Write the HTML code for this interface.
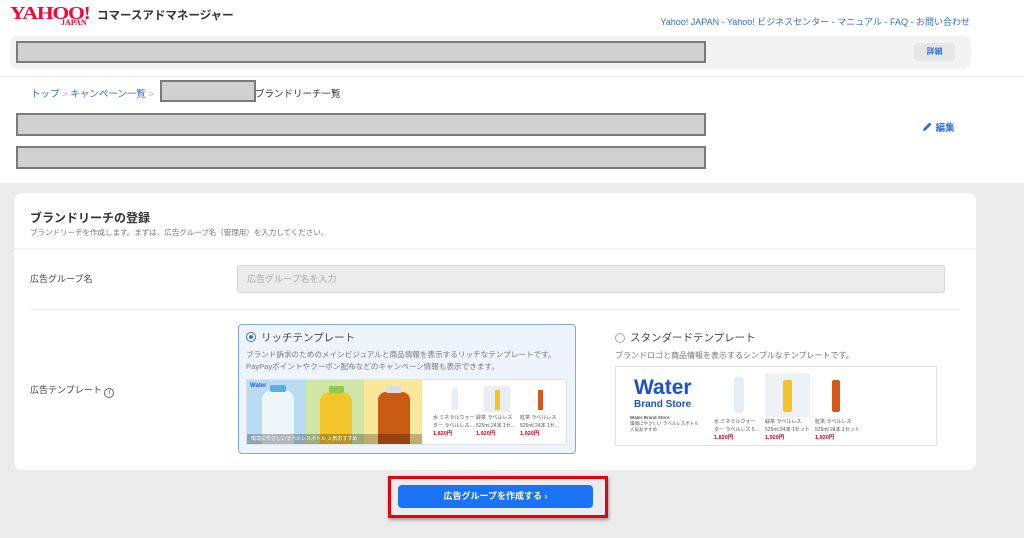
<!DOCTYPE html>
<html><head><meta charset="utf-8"><style>
*{margin:0;padding:0;box-sizing:border-box}
body{width:1024px;height:538px;overflow:hidden;background:#fff;font-family:"Liberation Sans","Noto Sans CJK JP",sans-serif;position:relative;color:#333}
.a{position:absolute}
.gbox{position:absolute;background:#d0d0d0;border:2px solid #7a7a7a}
.blue{color:#2f6fd6}
.sm{font-size:5px;color:#555;line-height:8px;white-space:nowrap}
.pr{color:#d0021b;font-size:5.5px;font-weight:bold}
</style></head><body>
<div class="a" style="left:10px;top:3px;font-family:'Liberation Serif',serif;font-weight:bold;color:#ff0033;font-size:18px;letter-spacing:-1px;transform:scaleX(1.2);transform-origin:left">YAHOO!</div>
<div class="a" style="left:61px;top:18px;font-family:'Liberation Serif',serif;font-weight:bold;color:#ff0033;font-size:8px">JAPAN</div>
<div class="a" style="left:97px;top:7px;font-size:11.5px;font-weight:bold;color:#333">コマースアドマネージャー</div>
<div class="a blue" style="right:54px;top:15px;font-size:9px">Yahoo! JAPAN - Yahoo! ビジネスセンター - マニュアル - FAQ - お問い合わせ</div>
<div class="a" style="left:10px;top:36px;width:961px;height:33px;background:#f3f3f3;border-radius:8px"></div>
<div class="gbox" style="left:16px;top:41px;width:690px;height:22px"></div>
<div class="a" style="left:914px;top:43px;width:41px;height:18px;background:#e6e6e6;border-radius:4px;font-size:8px;font-weight:bold;color:#2f6fd6;text-align:center;line-height:18px">詳細</div>
<div class="a" style="left:0;top:76px;width:1024px;height:1px;background:#eaeaea"></div>
<div class="a" style="left:31px;top:86px;font-size:9.5px;color:#aaa"><span class="blue">トップ</span> &gt; <span class="blue">キャンペーン一覧</span> &gt;</div>
<div class="gbox" style="left:160px;top:80px;width:96px;height:22px"></div>
<div class="a" style="left:255px;top:86px;font-size:9.5px;color:#333">ブランドリーチ一覧</div>
<div class="gbox" style="left:16px;top:113px;width:690px;height:23px"></div>
<div class="gbox" style="left:16px;top:146px;width:690px;height:23px"></div>
<div class="a blue" style="left:922px;top:120px;font-size:9.5px;font-weight:bold"><svg width="11" height="11" viewBox="0 0 11 11" style="vertical-align:-1px"><path d="M1 10 L1.5 7.5 L7.5 1.5 L9.5 3.5 L3.5 9.5 Z" fill="#2f6fd6"/></svg> 編集</div>
<div class="a" style="left:0;top:183px;width:1024px;height:355px;background:#ebebeb"></div>
<div class="a" style="left:14px;top:193px;width:962px;height:277px;background:#fff;border-radius:8px"></div>
<div class="a" style="left:30px;top:209px;font-size:12px;font-weight:bold;color:#333">ブランドリーチの登録</div>
<div class="a" style="left:30px;top:227px;font-size:7.5px;color:#777">ブランドリーチを作成します。まずは、広告グループ名（管理用）を入力してください。</div>
<div class="a" style="left:14px;top:248px;width:962px;height:1px;background:#eee"></div>
<div class="a" style="left:30px;top:272px;font-size:9px;color:#444">広告グループ名</div>
<div class="a" style="left:237px;top:265px;width:708px;height:28px;background:#ebebeb;border:1px solid #d6d6d6;border-radius:3px;font-size:9px;color:#aaa;line-height:26px;padding-left:9px">広告グループ名を入力</div>
<div class="a" style="left:30px;top:309px;width:930px;height:1px;background:#eee"></div>
<div class="a" style="left:30px;top:383px;font-size:9px;color:#444">広告テンプレート <span style="display:inline-block;width:10px;height:10px;border:1px solid #666;border-radius:50%;font-size:7px;text-align:center;line-height:8px;vertical-align:-1px">i</span></div>
<div class="a" style="left:238px;top:324px;width:338px;height:130px;background:#eef4fd;border:1.5px solid #7ba7ee;border-radius:4px"></div>
<div class="a" style="left:246px;top:332px;width:10px;height:10px;border:1px solid #2f6fd6;border-radius:50%;background:#fff"><div style="margin:2px;width:4px;height:4px;border-radius:50%;background:#2f6fd6"></div></div>
<div class="a" style="left:261px;top:330px;font-size:10.5px;color:#444">リッチテンプレート</div>
<div class="a" style="left:246px;top:349px;font-size:7.6px;color:#777;line-height:12px;white-space:nowrap">ブランド訴求のためのメインビジュアルと商品情報を表示するリッチなテンプレートです。<br>PayPayポイントやクーポン配布などのキャンペーン情報も表示できます。</div>
<div class="a" style="left:246px;top:379px;width:321px;height:66px;background:#fff;border:1px solid #e2e2e2"></div>
<div class="a" style="left:247px;top:380px;width:59px;height:64px;background:#b9dcf2"></div>
<div class="a" style="left:306px;top:380px;width:58px;height:64px;background:#cfe6a6"></div>
<div class="a" style="left:364px;top:380px;width:58px;height:64px;background:#fbe79a"></div>
<div class="a" style="left:262px;top:390px;width:32px;height:54px;background:#eef5fb;border-radius:10px 10px 0 0"></div>
<div class="a" style="left:270px;top:385px;width:16px;height:7px;background:#5aaee6;border-radius:2px"></div>
<div class="a" style="left:320px;top:392px;width:32px;height:52px;background:#f2c62a;border-radius:10px 10px 0 0"></div>
<div class="a" style="left:329px;top:386px;width:15px;height:7px;background:#8fcb4a;border-radius:2px"></div>
<div class="a" style="left:378px;top:392px;width:32px;height:52px;background:#c85a14;border-radius:8px 8px 0 0"></div>
<div class="a" style="left:386px;top:386px;width:16px;height:7px;background:#ddd;border-radius:2px"></div>
<div class="a" style="left:250px;top:383px;font-size:6px;font-weight:bold;color:#2a5bd0">Water</div>
<div class="a" style="left:247px;top:434px;width:175px;height:10px;background:rgba(0,0,0,.25);font-size:5px;color:#fff;line-height:10px;padding-left:4px">環境にやさしいラベルレスボトル 人気おすすめ</div>
<div class="a" style="left:452px;top:388px;width:6px;height:22px;background:#e8eef4;border-radius:2px"></div>
<div class="a" style="left:484px;top:386px;width:26px;height:26px;background:#e8eef4"></div>
<div class="a" style="left:495px;top:390px;width:5px;height:20px;background:#f1c42a"></div>
<div class="a" style="left:538px;top:390px;width:5px;height:20px;background:#d7561a"></div>
<div class="a sm" style="left:433px;top:414px">水 ミネラルウォー<br>ター ラベルレス…<br><span class="pr">1,820円</span></div>
<div class="a sm" style="left:476px;top:414px">緑茶 ラベルレス<br>525ml 24本 1セ…<br><span class="pr">1,920円</span></div>
<div class="a sm" style="left:520px;top:414px">紅茶 ラベルレス<br>525ml 24本 1セ…<br><span class="pr">1,920円</span></div>
<div class="a" style="left:615px;top:333px;width:10px;height:10px;border:1px solid #aaa;border-radius:50%;background:#fff"></div>
<div class="a" style="left:630px;top:330px;font-size:10.5px;color:#444">スタンダードテンプレート</div>
<div class="a" style="left:615px;top:350px;font-size:8px;color:#777">ブランドロゴと商品情報を表示するシンプルなテンプレートです。</div>
<div class="a" style="left:615px;top:366px;width:322px;height:80px;background:#fff;border:1px solid #e2e2e2"></div>
<div class="a" style="left:634px;top:377px;font-size:21px;font-weight:bold;color:#1a4fd6;line-height:22px">Water</div>
<div class="a" style="left:634px;top:399px;font-size:10px;font-weight:bold;color:#1a4fd6">Brand Store</div>
<div class="a sm" style="left:630px;top:415px;font-size:4.5px;line-height:6px"><b>Water Brand Store</b><br>環境にやさしい ラベルレスボトル<br>人気おすすめ</div>
<div class="a" style="left:734px;top:377px;width:10px;height:36px;background:#e6eef5;border-radius:3px"></div>
<div class="a" style="left:765px;top:373px;width:45px;height:44px;background:#eef2f6"></div>
<div class="a" style="left:783px;top:380px;width:9px;height:32px;background:#f1c42a;border-radius:2px"></div>
<div class="a" style="left:832px;top:380px;width:8px;height:32px;background:#d7561a;border-radius:2px"></div>
<div class="a sm" style="left:714px;top:418px">水 ミネラルウォー<br>ター ラベルレス 5…<br><span class="pr">1,820円</span></div>
<div class="a sm" style="left:765px;top:418px">緑茶 ラベルレス<br>525ml 24本 1セット<br><span class="pr">1,920円</span></div>
<div class="a sm" style="left:815px;top:418px">紅茶 ラベルレス<br>525ml 24本 1セット<br><span class="pr">1,920円</span></div>
<div class="a" style="left:388px;top:476px;width:220px;height:42px;border:3px solid #e8000b;box-shadow:1px 2px 3px rgba(0,0,0,.35)"></div>
<div class="a" style="left:398px;top:485px;width:195px;height:23px;background:#1a73f5;border-radius:4px;color:#fff;font-size:9px;font-weight:bold;text-align:center;line-height:23px">広告グループを作成する ›</div>
</body></html>
